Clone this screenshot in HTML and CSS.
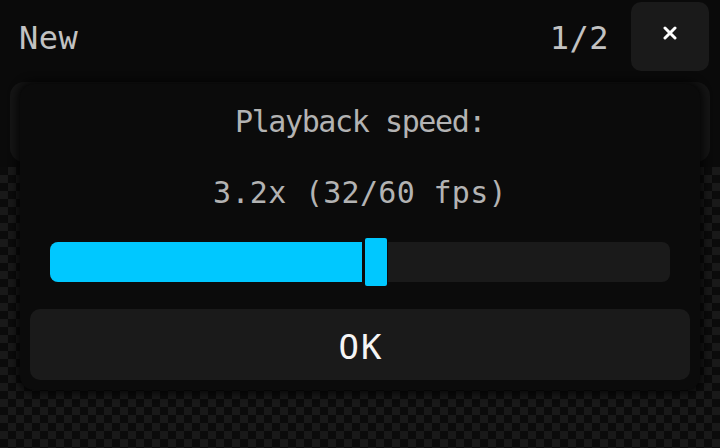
FILE: index.html
```html
<!DOCTYPE html>
<html>
<head>
<meta charset="utf-8">
<link rel="stylesheet" href="styles.css">
</head>
<body>
<div class="app">
  <header class="topbar">
    <span class="title">New</span>
    <span class="counter">1/2</span>
    <button class="close" aria-label="Close">
      <svg width="14" height="14" viewBox="0 0 14 14"><path d="M2 2 L12 12 M12 2 L2 12" stroke="#fff" stroke-width="3" stroke-linecap="round"/></svg>
    </button>
  </header>
  <div class="card"></div>
  <div class="canvas"></div>
</div>
<div class="dialog">
  <div class="label">Playback speed:</div>
  <div class="value">3.2x (32/60 fps)</div>
  <div class="slider">
    <div class="track">
      <div class="fill" style="width:50.4%"></div>
    </div>
    <div class="thumb" style="left:calc(50.4% + 3px)"></div>
  </div>
  <button class="ok">OK</button>
</div>
</body>
</html>
```
FILE: styles.css
```css
html, body {
  margin: 0;
  padding: 0;
  width: 720px;
  height: 448px;
  overflow: hidden;
  background: #0a0a0a;
  font-family: "DejaVu Sans Mono", "Liberation Mono", monospace;
}
.app {
  display: flex;
  flex-direction: column;
  height: 448px;
}
.topbar {
  display: flex;
  align-items: center;
  padding: 2px 11px 11px 19px;
  height: 69px;
}
.title, .counter {
  font-size: 32px;
  line-height: 40px;
  color: #c2c2c2;
  letter-spacing: 0.5px;
  margin-top: 3px;
}
.counter {
  margin-left: auto;
  margin-right: 22px;
}
.close {
  width: 78px;
  height: 69px;
  border: none;
  border-radius: 10px;
  background: #1a1a1a;
  display: flex;
  align-items: center;
  justify-content: center;
  padding: 0 0 8px 0;
}
.close svg { display: block; }
.card {
  margin: 0 10px;
  height: 80px;
  border-radius: 14px;
  background: #151515;
}
.canvas {
  flex: 1;
  margin-top: 5px;
  background-color: #0b0b0b;
  background-image: repeating-conic-gradient(#191919 0 25%, #0b0b0b 0 50%);
  background-size: 16px 16px;
}
.dialog {
  position: absolute;
  left: 20px;
  top: 84px;
  width: 680px;
  box-sizing: border-box;
  padding: 18px 10px 10px;
  background: #0b0b0b;
  border-radius: 14px;
  box-shadow: 0 0 8px 3px rgba(0, 0, 0, 0.75);
  display: flex;
  flex-direction: column;
}
.label, .value {
  text-align: center;
  font-size: 30px;
  line-height: 40px;
  color: #b3b3b3;
}
.label { letter-spacing: -1.4px; }
.value { margin-top: 31px; letter-spacing: 0.3px; }
.slider {
  position: relative;
  margin: 25px 20px 0;
  height: 48px;
  display: flex;
  align-items: center;
}
.track {
  flex: 1;
  height: 40px;
  border-radius: 8px;
  background: #1a1a1a;
  overflow: hidden;
}
.fill {
  height: 100%;
  background: #00c8ff;
}
.thumb {
  position: absolute;
  top: 0;
  width: 22px;
  height: 48px;
  border-radius: 2px;
  background: #00c8ff;
  box-shadow: -3px 0 0 0 #0b0b0b, 1px 0 0 0 #0b0b0b;
}
.ok {
  margin-top: 23px;
  height: 71px;
  border: none;
  border-radius: 10px;
  background: #1a1a1a;
  color: #f5f5f5;
  font-family: "DejaVu Sans Mono", "Liberation Mono", monospace;
  font-size: 34px;
  line-height: 40px;
  letter-spacing: 2px;
  padding: 4px 0 0 2px;
}
```
